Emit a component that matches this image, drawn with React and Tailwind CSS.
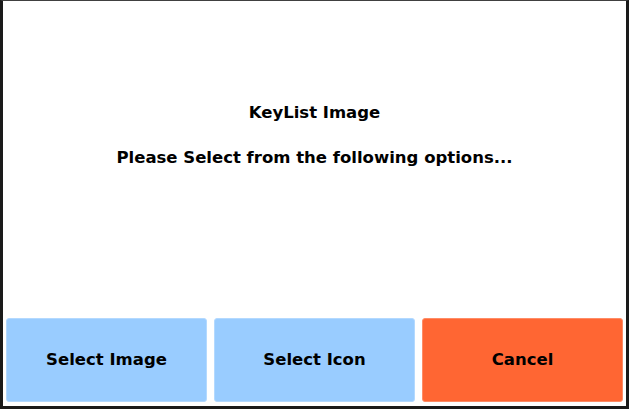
import React from 'react';

const buttons = [
  { label: 'Select Image', color: 'bg-[#99ccff] border-[#b3d9ff]' },
  { label: 'Select Icon', color: 'bg-[#99ccff] border-[#b3d9ff]' },
  { label: 'Cancel', color: 'bg-[#ff6633] border-[#ff8c66]' }
];

const App = () => {
  return (
    <div
      className="w-[629px] h-[409px] bg-white flex flex-col border-t border-t-[#404040] border-l-[3px] border-l-[#1a1a1a] border-r-[3px] border-r-[#1a1a1a] border-b-[3px] border-b-[#1a1a1a] text-black"
      style={{ fontFamily: '"DejaVu Sans", Verdana, sans-serif' }}
    >
      <div className="flex-1 flex flex-col items-center pt-[101px]">
        <h1 className="text-[16.5px] font-bold leading-[22px]">KeyList Image</h1>
        <p className="text-[16.5px] font-bold leading-[22px] mt-[23px]">Please Select from the following options...</p>
      </div>

      <div className="grid grid-cols-3 gap-[7px] px-[3px] pb-[4px]">
        {buttons.map((b) => (
          <button
            key={b.label}
            className={`h-[84px] rounded-[3px] border font-bold text-[16.5px] ${b.color}`}
          >
            {b.label}
          </button>
        ))}
      </div>
    </div>
  );
};

export default App;
